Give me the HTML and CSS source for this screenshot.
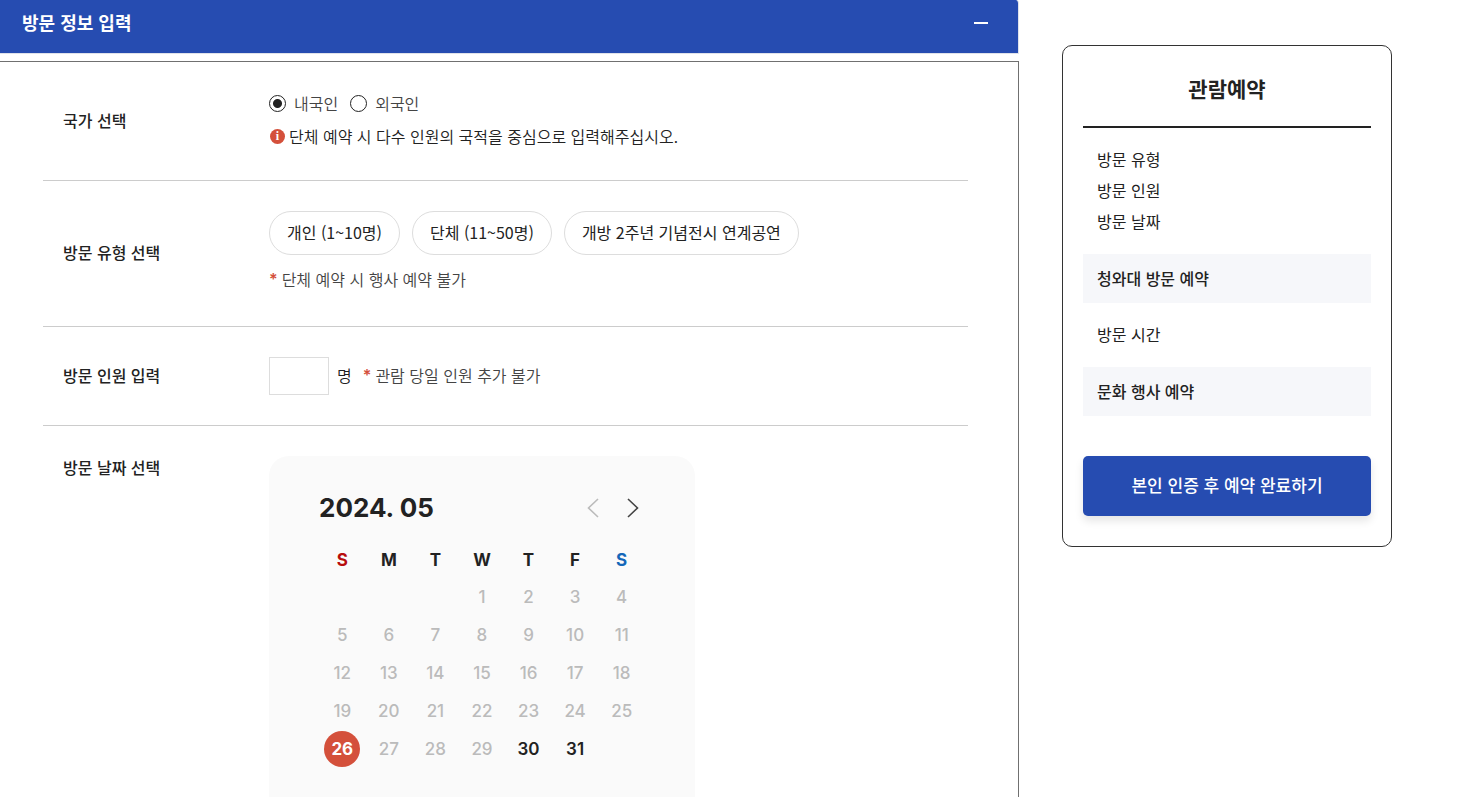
FILE: index.html
```
<!DOCTYPE html>
<html lang="ko">
<head>
  <meta charset="UTF-8">
  <meta name="viewport" content="width=device-width, initial-scale=1.0">
  <title>관람예약</title>
  <link rel="stylesheet" href="styles.css">
</head>
<body>

<div class="page">
  <main class="content">
    <div class="section-head">
      <h2>방문 정보 입력</h2>
      <button type="button" class="toggle-btn" aria-label="접기"></button>
    </div>

    <form class="panel">
      <div class="row">
        <div class="row-label">국가 선택</div>
        <div class="row-body">
          <div class="radio-group">
            <label><input type="radio" name="nation" checked>내국인</label>
            <label><input type="radio" name="nation">외국인</label>
          </div>
          <p class="notice"><span class="info-icon">i</span>단체 예약 시 다수 인원의 국적을 중심으로 입력해주십시오.</p>
        </div>
      </div>

      <div class="row">
        <div class="row-label">방문 유형 선택</div>
        <div class="row-body">
          <div class="chips">
            <button type="button" class="chip">개인 (1~10명)</button>
            <button type="button" class="chip">단체 (11~50명)</button>
            <button type="button" class="chip">개방 2주년 기념전시 연계공연</button>
          </div>
          <p class="note note-below"><span class="star">*</span>단체 예약 시 행사 예약 불가</p>
        </div>
      </div>

      <div class="row">
        <label class="row-label" for="people">방문 인원 입력</label>
        <div class="row-body people">
          <input type="text" id="people" class="people-input">
          <span class="unit">명</span>
          <p class="note"><span class="star">*</span>관람 당일 인원 추가 불가</p>
        </div>
      </div>

      <div class="row row-date">
        <div class="row-label">방문 날짜 선택</div>
        <div class="row-body">
          <div class="calendar">
            <div class="calendar-head">
              <strong>2024. 05</strong>
              <div class="calendar-nav">
                <button type="button" class="prev" aria-label="이전 달" disabled>
                  <svg width="12" height="20" viewBox="0 0 12 20"><path d="M11 1L1.500 10L11 19"/></svg>
                </button>
                <button type="button" class="next" aria-label="다음 달">
                  <svg width="12" height="20" viewBox="0 0 12 20"><path d="M1 1L10.500 10L1 19"/></svg>
                </button>
              </div>
            </div>
            <table>
              <thead>
                <tr><th class="sun">S</th><th>M</th><th>T</th><th>W</th><th>T</th><th>F</th><th class="sat">S</th></tr>
              </thead>
              <tbody>
                <tr><td></td><td></td><td></td><td>1</td><td>2</td><td>3</td><td>4</td></tr>
                <tr><td>5</td><td>6</td><td>7</td><td>8</td><td>9</td><td>10</td><td>11</td></tr>
                <tr><td>12</td><td>13</td><td>14</td><td>15</td><td>16</td><td>17</td><td>18</td></tr>
                <tr><td>19</td><td>20</td><td>21</td><td>22</td><td>23</td><td>24</td><td>25</td></tr>
                <tr>
                  <td><button type="button" class="day today">26</button></td>
                  <td>27</td><td>28</td><td>29</td>
                  <td><button type="button" class="day">30</button></td>
                  <td><button type="button" class="day">31</button></td>
                  <td></td>
                </tr>
              </tbody>
            </table>
          </div>
        </div>
      </div>
    </form>
  </main>

  <aside class="summary">
    <h2>관람예약</h2>
    <ul>
      <li>방문 유형</li>
      <li>방문 인원</li>
      <li>방문 날짜</li>
    </ul>
    <h3>청와대 방문 예약</h3>
    <ul>
      <li>방문 시간</li>
    </ul>
    <h3>문화 행사 예약</h3>
    <button type="button" class="submit-btn">본인 인증 후 예약 완료하기</button>
  </aside>
</div>

</body>
</html>
```

FILE: styles.css
```
* {
  box-sizing: border-box;
}

body {
  margin: 0;
  font-family: "Noto Sans CJK KR", sans-serif;
  font-size: 16px;
  line-height: 24px;
  color: #222;
  background-color: #fff;
}

h2, h3, p, ul {
  margin: 0;
  padding: 0;
}

ul {
  list-style: none;
}

button, input {
  font-family: inherit;
  font-size: inherit;
  color: inherit;
}

button {
  padding: 0;
  border: none;
  background: none;
  cursor: pointer;
}

.page {
  display: grid;
  grid-template-columns: minmax(0, 1fr) 330px;
  column-gap: 43px;
  align-items: start;
  padding-right: 87px;
}

.section-head {
  display: flex;
  align-items: center;
  justify-content: space-between;
  height: 54px;
  padding: 0 28px 7px 22px;
  border-right: 1px solid #dfe2ea;
  border-bottom: 1px solid #dfe2ea;
  border-top-right-radius: 3px;
  color: #fff;
  background-color: #264cb1;
  background-clip: padding-box;
}

.section-head h2 {
  padding-bottom: 2px;
  font-size: 18px;
  font-weight: 700;
}

.toggle-btn {
  width: 16px;
  height: 16px;
}

.toggle-btn::before {
  content: "";
  display: block;
  width: 14px;
  height: 2px;
  background-color: #fff;
}

.panel {
  margin-top: 7px;
  padding: 0 50px 0 43px;
  border-top: 1px solid #707070;
  border-right: 1px solid #707070;
}

.row {
  display: grid;
  grid-template-columns: 206px minmax(0, 1fr);
  align-items: center;
  padding: 30px 0 30px 20px;
  border-bottom: 1px solid #ccc;
}

.row-label {
  padding-bottom: 3px;
  font-weight: 500;
}

.row-date {
  align-items: start;
  padding-bottom: 0;
  border-bottom: none;
}

.row-date .row-label {
  line-height: 22px;
}

.radio-group {
  display: flex;
  gap: 12px;
  margin-bottom: 10px;
  line-height: 22px;
  font-weight: 350;
  color: #444;
}

.radio-group label {
  display: flex;
  align-items: center;
  gap: 8px;
}

.radio-group input {
  appearance: none;
  width: 17px;
  height: 17px;
  margin: 0;
  border: 1px solid #222;
  border-radius: 50%;
}

.radio-group input:checked {
  background: radial-gradient(circle, #222 4px, #fff 5px);
}

.notice {
  display: flex;
  align-items: center;
  gap: 4px;
  padding-bottom: 2px;
  font-weight: 350;
}

.info-icon {
  width: 15px;
  height: 15px;
  margin-left: 1px;
  border-radius: 50%;
  font-family: "Liberation Serif", serif;
  font-size: 12px;
  font-weight: 700;
  line-height: 14px;
  text-align: center;
  color: #fff;
  background-color: #d4503b;
}

.chips {
  display: flex;
  flex-wrap: wrap;
  gap: 12px;
}

.chip {
  height: 44px;
  padding: 0 17px 2px;
  border: 1px solid #ddd;
  border-radius: 22px;
  font-weight: 400;
}

.note {
  display: flex;
  gap: 4px;
  padding-bottom: 2px;
  font-weight: 350;
  color: #444;
}

.note-below {
  margin: 12px 0 3px;
}

.star {
  font-family: Inter, sans-serif;
  font-weight: 600;
  color: #d4503b;
}

.people {
  display: flex;
  align-items: center;
}

.people-input {
  width: 60px;
  height: 38px;
  border: 1px solid #ddd;
}

.unit {
  margin: 0 11px 0 8px;
  padding-bottom: 2px;
  font-weight: 350;
}

.calendar {
  max-width: 426px;
  padding: 34px 50px 29px;
  border-radius: 20px 20px 0 0;
  font-family: Inter, sans-serif;
  background-color: #fafafa;
}

.calendar-head {
  display: flex;
  align-items: center;
  justify-content: space-between;
  height: 36px;
  margin-bottom: 16px;
  padding-right: 6px;
}

.calendar-head strong {
  font-size: 26px;
  font-weight: 700;
}

.calendar-nav {
  display: flex;
  gap: 28px;
}

.calendar-nav svg {
  display: block;
  fill: none;
  stroke: #444;
  stroke-width: 1.6;
}

.calendar-nav .prev svg {
  stroke: #bbb;
}

.calendar table {
  width: 100%;
  table-layout: fixed;
  border-collapse: collapse;
}

.calendar th {
  height: 36px;
  padding: 0;
  font-size: 17px;
  font-weight: 700;
}

.calendar td {
  height: 38px;
  padding: 0;
  font-size: 17px;
  font-weight: 500;
  text-align: center;
  color: #bbb;
}

.calendar .sun {
  color: #b70d0d;
}

.calendar .sat {
  color: #1467b9;
}

.day {
  display: block;
  width: 36px;
  height: 36px;
  margin: 0 auto;
  border-radius: 50%;
  font-weight: 600;
  color: #222;
}

.today {
  font-weight: 700;
  color: #fff;
  background-color: #d4503b;
}

.summary {
  margin-top: 45px;
  padding: 0 20px 30px;
  border: 1px solid #333;
  border-radius: 10px;
}

.summary h2 {
  padding: 26px 0 22px;
  border-bottom: 2px solid #222;
  font-size: 21px;
  font-weight: 600;
  line-height: 32px;
  text-align: center;
}

.summary ul {
  padding: 16px 14px 17px;
  line-height: 31px;
}

.summary h3 {
  padding: 0 14px;
  font-size: 16px;
  font-weight: 500;
  line-height: 49px;
  background-color: #f6f7fa;
}

.submit-btn {
  width: 100%;
  height: 60px;
  margin-top: 40px;
  padding-bottom: 3px;
  border-radius: 5px;
  font-size: 17px;
  font-weight: 500;
  color: #fff;
  background-color: #264cb1;
  box-shadow: 0 5px 8px rgba(0, 0, 0, 0.1);
}
```
